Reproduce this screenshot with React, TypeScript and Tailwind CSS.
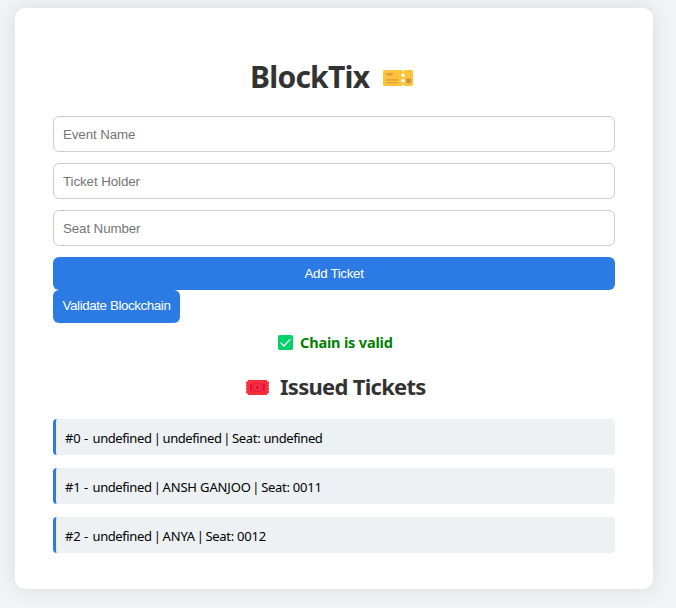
import React from "react";

const tickets = [
  { id: 0, event: "undefined", holder: "undefined", seat: "undefined" },
  { id: 1, event: "undefined", holder: "ANSH GANJOO", seat: "0011" },
  { id: 2, event: "undefined", holder: "ANYA", seat: "0012" },
];

const fields = [
  { label: "Event Name", spacing: "tracking-[-0.1px]" },
  { label: "Ticket Holder", spacing: "tracking-[-0.08px]" },
  { label: "Seat Number", spacing: "tracking-[-0.1px]" },
];

function GoldTicket() {
  return (
    <svg width="30" height="16" viewBox="0 0 30 16" className="mt-[2px] shrink-0" aria-hidden="true">
      <path d="M1.5 0H18.4a1.7 1.7 0 0 0 3.2 0H28.5Q30 0 30 1.5V14.5Q30 16 28.5 16H21.6a1.7 1.7 0 0 0-3.2 0H1.5Q0 16 0 14.5V1.5Q0 0 1.5 0Z" fill="#fbc23c" />
      <circle cx="20" cy="5.3" r="1.8" fill="#fff" />
      <circle cx="20" cy="10.8" r="1.8" fill="#fff" />
      <rect x="3.2" y="3.2" width="6.6" height="2" rx="1" fill="#dc913c" />
      <rect x="3.2" y="9.1" width="12" height="1.7" rx=".6" fill="#e8a33a" />
      <rect x="3.2" y="11.9" width="12" height="1.7" rx=".6" fill="#e8a33a" />
      <rect x="23.3" y="8.6" width="4.6" height="4.6" rx="1" fill="#d98d3e" />
    </svg>
  );
}

function RedTicket() {
  return (
    <svg width="23" height="15" viewBox="0 0 23 15" className="shrink-0" aria-hidden="true">
      <path d="M2 0H21V1Q21 1.6 23 1.8V3.7Q21.5 4.3 23 5V6.6Q21.5 7.3 23 8V9.7Q21.5 10.4 23 11V13Q21 13.3 21 14.2V15H2V14.2Q2 13.3 0 13V11Q1.5 10.4 0 9.7V8Q1.5 7.3 0 6.6V5Q1.5 4.3 0 3.7V1.8Q2 1.6 2 1Z" fill="#f92f3c" />
      <path d="M5 4V11M18 4V11" stroke="#ca0b4a" strokeWidth="1.5" />
      <rect x="7.3" y="3.8" width="8.4" height="7.4" fill="none" stroke="#dc1744" strokeWidth=".8" />
      <circle cx="11.5" cy="7.5" r="1.4" fill="#ca0b4a" />
    </svg>
  );
}

function CheckMark() {
  return (
    <svg width="15" height="15" viewBox="0 0 15 15" className="shrink-0" aria-hidden="true">
      <rect width="15" height="15" rx="1.7" fill="#00d26a" />
      <path d="M3 8l3 3L12 4.6" fill="none" stroke="#fff" strokeWidth="1.3" strokeLinecap="round" strokeLinejoin="round" />
    </svg>
  );
}

function Divider() {
  return <span className="flex w-[10.5px] shrink-0 justify-center">|</span>;
}

function nameSpacing(value: string) {
  return value === "undefined" ? "tracking-[-0.4px]" : "tracking-[-0.15px]";
}

export default function App() {
  return (
    <div className="h-[608px] w-full overflow-hidden bg-[#f2f3f5] pt-2 pl-[15px] font-['Noto_Sans',sans-serif]">
      <main className="h-[581px] w-[638px] rounded-[10px] bg-white px-[38px] pt-[49px] shadow-[0_0_20px_rgba(0,0,0,0.1)]">
        <h1 className="ml-[197px] flex h-[40px] items-center text-[30px] leading-[40px] font-bold text-[#333]">
          <span className="w-[133px] whitespace-nowrap tracking-[-0.75px]">BlockTix</span>
          <GoldTicket />
        </h1>

        <form className="mt-[19px] flex flex-col gap-[11px] font-['Liberation_Sans',sans-serif] text-[13.333px]">
          {fields.map(({ label, spacing }) => (
            <input
              key={label}
              placeholder={label}
              className={`h-9 w-full rounded-[6px] border border-[#ccc] bg-white px-[9px] placeholder:text-[#757575] ${spacing}`}
            />
          ))}
          <button type="button" className="h-[33px] w-full rounded-[6px] bg-[#2c7be5] tracking-[-0.32px] text-white">
            Add Ticket
          </button>
        </form>
        <button
          type="button"
          className="block h-[33px] w-[127px] rounded-[6px] bg-[#2c7be5] pb-[2px] font-['Liberation_Sans',sans-serif] text-[13.333px] tracking-[-0.39px] whitespace-nowrap text-white"
        >
          Validate Blockchain
        </button>

        <p className="mt-[9px] ml-[225px] flex h-[21px] items-center gap-[7px] text-[14.5px] leading-[21px] font-bold whitespace-nowrap text-[#008000]">
          <CheckMark />
          <span className="tracking-[-0.17px]">Chain is valid</span>
        </p>

        <h2 className="mt-[18px] ml-[193px] flex h-[32px] items-center gap-[11px] text-[22px] leading-[32px] font-bold whitespace-nowrap text-[#333]">
          <RedTicket />
          <span className="pb-[2px] tracking-[-0.72px]">Issued Tickets</span>
        </h2>

        <ul className="mt-4 flex flex-col gap-[13px]">
          {tickets.map((ticket) => (
            <li
              key={ticket.id}
              className="flex h-9 items-center rounded-[4px] border-l-[3px] border-[#2c7be5] bg-[#edf1f4] pt-[3px] pl-[9px] text-[13px] whitespace-nowrap text-black"
            >
              <span className="w-[19px] tracking-[-0.2px]">#{ticket.id}</span>
              <span className="w-[8.5px]">-</span>
              <span className="w-[59.5px] tracking-[-0.4px]">{ticket.event}</span>
              <Divider />
              <span className={nameSpacing(ticket.holder)}>{ticket.holder}</span>
              <Divider />
              <span className="w-[31.5px] tracking-[-0.3px]">Seat:</span>
              <span className={nameSpacing(ticket.seat)}>{ticket.seat}</span>
            </li>
          ))}
        </ul>
      </main>
    </div>
  );
}
